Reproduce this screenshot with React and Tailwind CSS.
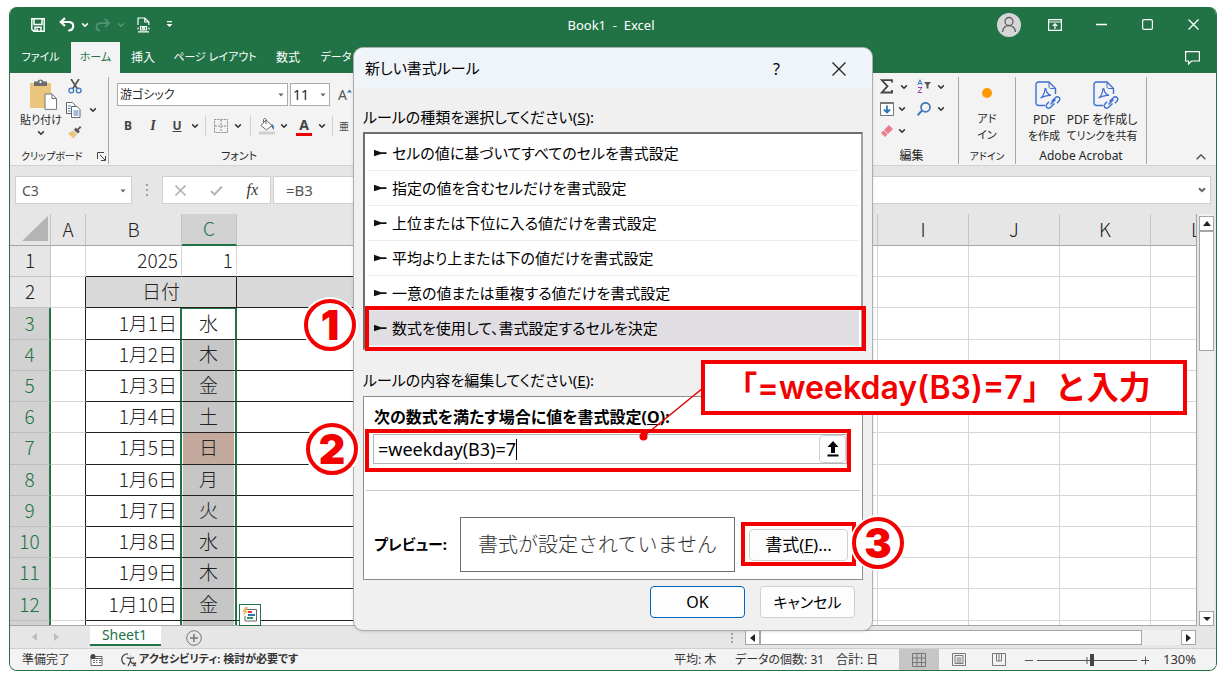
import React from "react";

const RULES = [
  "セルの値に基づいてすべてのセルを書式設定",
  "指定の値を含むセルだけを書式設定",
  "上位または下位に入る値だけを書式設定",
  "平均より上または下の値だけを書式設定",
  "一意の値または重複する値だけを書式設定",
  "数式を使用して、書式設定するセルを決定",
];

const DAYS = [
  ["1月1日", "水"],
  ["1月2日", "木"],
  ["1月3日", "金"],
  ["1月4日", "土"],
  ["1月5日", "日"],
  ["1月6日", "月"],
  ["1月7日", "火"],
  ["1月8日", "水"],
  ["1月9日", "木"],
  ["1月10日", "金"],
  ["", ""],
];

function Chevron({ className = "text-[#333]" }) {
  return (
    <svg width="8" height="6" viewBox="0 0 8 6" className={`shrink-0 ${className}`} aria-hidden="true">
      <path d="M1.2 1.4 4 4.2 6.8 1.4" fill="none" stroke="currentColor" strokeWidth="1.5" />
    </svg>
  );
}

function Triangle({ dir = "down", className = "text-[#666]" }) {
  const d = {
    small: "M1.5 2.5h5L4 5.5z",
    down: "M0 2h8L4 6z",
    up: "M0 6h8L4 1z",
    left: "M6 0v8L1 4z",
    right: "M1 0v8l5-4z",
  }[dir];
  return (
    <svg width="8" height="8" viewBox="0 0 8 8" className={`shrink-0 ${className}`} aria-hidden="true">
      <path d={d} fill="currentColor" />
    </svg>
  );
}

function TitleBar() {
  return (
    <header className="flex h-[35px] items-center bg-[#217346] text-white">
      <div className="flex w-[300px] items-center pl-[21px]">
        <button aria-label="上書き保存">
          <svg width="14" height="14" viewBox="0 0 14 14" fill="none" stroke="currentColor" strokeWidth="1.5">
            <path d="M.8.8h12.4v12.4H2.8L.8 11.2z" />
            <path d="M3 1v5.500h8V1M4 13V9.200h6V13M6.200 13v-2.400" />
          </svg>
        </button>
        <button aria-label="元に戻す" className="ml-3.5 flex items-center gap-1.5">
          <svg width="16" height="15" viewBox="0 0 16 15" fill="none" stroke="currentColor" strokeWidth="2.2">
            <path d="M6 1 1.8 5 6 9M2 5h7.500c3 0 4.700 1.600 4.700 4s-1.700 4.500-5 4.500" />
          </svg>
          <Chevron className="text-white" />
        </button>
        <button aria-label="やり直し" className="ml-1.5 flex items-center gap-1.5 text-[#4f9270]">
          <svg width="16" height="14" viewBox="0 0 16 14" fill="none" stroke="currentColor" strokeWidth="1.800">
            <path d="m10 1 4 4-4 4M14 5H6C3.200 5 1.500 6.500 1.500 8.800S3 12.500 5 12.500" />
          </svg>
          <Chevron className="text-[#4f9270]" />
        </button>
        <button aria-label="印刷プレビュー" className="ml-3">
          <svg width="13" height="16" viewBox="0 0 13 16" fill="none" stroke="currentColor" strokeWidth="1.200">
            <path d="M1 8V1h6.800l4 4v3M7.800 1v4h4M1 14.800h11M1 10.500v2M12 10.500v2M3.500 9.500h6v3.500h-6z" />
            <circle cx="6.500" cy="11.200" r="1" />
          </svg>
        </button>
        <button aria-label="クイック アクセスのカスタマイズ" className="ml-4">
          <svg width="7" height="7" viewBox="0 0 7 7" fill="currentColor">
            <path d="M1 0h5v1.200H1zM.5 3h6l-3 3z" />
          </svg>
        </button>
      </div>
      <h1 className="flex-1 whitespace-pre pr-1 pt-0.5 text-center text-[13px]">Book1  -  Excel</h1>
      <div className="flex w-[300px] items-center justify-end pr-[17px]">
        <button aria-label="アカウント" className="mr-[27px] flex size-6 items-center justify-center rounded-full bg-[#d6d6d6] text-[#5f5f5f]">
          <svg width="16" height="17" viewBox="0 0 16 17" fill="none" stroke="currentColor" strokeWidth="1.300">
            <circle cx="8" cy="5.500" r="4" />
            <path d="M1.500 16c.5-4 3-6.300 6.500-6.300s6 2.300 6.500 6.300" />
          </svg>
        </button>
        <button aria-label="リボンの表示オプション" className="mr-[34px]">
          <svg width="14" height="12" viewBox="0 0 14 12" fill="none" stroke="currentColor" strokeWidth="1.200">
            <path d="M.6.6h12.800v10.800H.6zM.6 3h12.800M7 10V5M4.700 7 7 4.800 9.300 7" />
          </svg>
        </button>
        <button aria-label="最小化" className="mr-[35px]">
          <svg width="11" height="12" viewBox="0 0 11 12" stroke="currentColor" strokeWidth="1.300">
            <path d="M0 5.500h11" />
          </svg>
        </button>
        <button aria-label="最大化" className="mr-[35px]">
          <svg width="11" height="11" viewBox="0 0 11 11" fill="none" stroke="currentColor" strokeWidth="1.200">
            <rect x=".6" y=".6" width="9.800" height="9.800" rx="1.500" />
          </svg>
        </button>
        <button aria-label="閉じる">
          <svg width="11" height="11" viewBox="0 0 11 11" stroke="currentColor" strokeWidth="1.300">
            <path d="m.5.5 10 10m0-10-10 10" />
          </svg>
        </button>
      </div>
    </header>
  );
}

function RibbonTabs() {
  return (
    <nav className="flex h-[31px] items-stretch bg-[#217346] text-[11px] text-white">
      <button className="w-[61px]">ファイル</button>
      <button className="w-[49px] bg-[#f3f3f3] text-[#217346]">ホーム</button>
      <button className="w-[46px] text-xs">挿入</button>
      <button className="w-[98px] whitespace-nowrap">ページ レイアウト</button>
      <button className="w-12 text-xs">数式</button>
      <button className="w-12">データ</button>
      <button aria-label="コメント" className="ml-auto mr-4">
        <svg width="15" height="14" viewBox="0 0 15 14" fill="none" stroke="currentColor" strokeWidth="1.200">
          <path d="M.6.6h13.800v9.400H6.500L3.500 13v-3H.6z" />
        </svg>
      </button>
    </nav>
  );
}

function PdfIcon() {
  return (
    <svg width="26" height="29" viewBox="0 0 26 29" fill="none" stroke="#3b6fd4" strokeWidth="1.400" className="ml-2 shrink-0" aria-hidden="true">
      <path d="M10 24.500H3.500c-1.500 0-2.500-1-2.500-2.500V3.500C1 2 2 1 3.500 1H14l6.500 6.500V13" />
      <path d="M14 1v4.500c0 1.200.8 2 2 2h4.500" strokeWidth="1" />
      <path d="M5.500 17c2-1 4.300-5 4.300-8.500 0-1.500 1.300-1.500 1.300 0 0 2.500 2.500 5.500 5 6-3.500-.5-7.500.8-10.600 2.500z" strokeWidth="1.200" />
      <path d="m16.500 20.500 3.800-3.800c1.200-1.200 2.800-1.200 3.800-.2s1 2.600-.2 3.800l-2 2M19.500 22.500l-3.800 3.800c-1.200 1.200-2.800 1.200-3.800.2s-1-2.600.2-3.800l2-2M15.500 23.500l5-5" />
    </svg>
  );
}

function Ribbon() {
  return (
    <section className="flex h-[93px] border-b border-[#d2d2d2] bg-[#f3f3f3] pb-px pt-1 text-xs text-[#262626]">
      <div className="flex w-[99px] flex-col justify-between border-r border-[#a8a8a8]">
        <div className="flex">
          <button className="flex w-[62px] flex-col items-center pt-0.5">
            <svg width="28" height="31" viewBox="0 0 28 31" className="ml-1" aria-hidden="true">
              <path d="M1 4h21v25H1z" fill="#ecc57d" />
              <path d="M5 2.500h3.500a3.200 3.200 0 0 1 6 0H18V7H5z" fill="#6b6b6b" />
              <circle cx="11.500" cy="3" r="1.200" fill="#f3f3f3" />
              <path d="M16 15h7l4.500 4.500V30.400H16z" fill="#fff" stroke="#777" />
              <path d="M23 15v4.500h4.500" fill="none" stroke="#777" />
            </svg>
            <span className="whitespace-nowrap text-[11px] leading-5">貼り付け</span>
            <Chevron />
          </button>
          <div className="flex flex-col gap-2 pt-0.5">
            <button aria-label="切り取り" className="-ml-1">
              <svg width="14" height="15" viewBox="0 0 14 15" fill="none" aria-hidden="true">
                <path d="M3 0 9.500 10M11 0 4.500 10" stroke="#555" strokeWidth="1.700" />
                <circle cx="3.300" cy="11.500" r="2.400" stroke="#3f78bd" strokeWidth="1.300" />
                <circle cx="10.700" cy="11.500" r="2.400" stroke="#3f78bd" strokeWidth="1.300" />
              </svg>
            </button>
            <button aria-label="コピー" className="-ml-1.5 flex items-center gap-2">
              <svg width="15" height="16" viewBox="0 0 15 16" fill="#fff" stroke="#666" aria-hidden="true">
                <path d="M.5.500h6l2.500 2.500v8.500H.5z" />
                <path d="M5.500 4.500h5.500l3 3v8H5.500z" />
                <path d="M2 4h3M2 6.500h2.500M2 9h2.500M7.500 9h5M7.500 11h5M7.500 13h5" stroke="#3f78bd" />
              </svg>
              <Chevron />
            </button>
            <button aria-label="書式のコピー" className="-ml-1">
              <svg width="14" height="13" viewBox="0 0 14 13" aria-hidden="true">
                <path d="m12 0 1.500 1.500L10.500 4 12 5.500 9.500 7.500 5.800 3.800 8 1.500 9.300 3z" fill="#5a5a5a" />
                <path d="m5 4.500 4 4L5.500 12.500 0 7.500z" fill="#ecc57d" />
              </svg>
            </button>
          </div>
        </div>
        <div className="flex items-center justify-between pl-[11px] pr-0.5 leading-4">
          <span className="whitespace-nowrap text-[10px]">クリップボード</span>
          <svg width="9" height="9" viewBox="0 0 9 9" fill="none" stroke="#444" aria-hidden="true">
            <path d="M.5 7V.5H7M3 3l5 5M8.500 4v4.500H4" />
          </svg>
        </div>
      </div>

      <div className="flex w-[260px] flex-col justify-between">
        <div className="pl-2 pt-1.5">
          <div className="flex items-center gap-0.5">
            <button className="flex h-[23px] w-[171px] items-center justify-between border border-[#ababab] bg-white pl-0.5 pr-0.5">
              游ゴシック
              <Triangle dir="small" />
            </button>
            <button className="flex h-[23px] w-10 items-center justify-between border border-[#ababab] bg-white pl-0.5 pr-0.5 text-sm">
              11
              <Triangle dir="small" />
            </button>
            <button className="ml-1.5 flex text-sm text-[#555]" aria-label="フォント サイズの拡大">
              A
              <svg width="5" height="4" viewBox="0 0 5 4" className="mt-1" aria-hidden="true">
                <path d="M0 3.500h5L2.500.5z" fill="#3f78bd" />
              </svg>
            </button>
          </div>
          <div className="mt-2 flex h-6 items-center font-bold text-[#444]">
            <button className="w-[22px]">B</button>
            <button className="ml-0.5 w-6 font-['Liberation_Serif'] text-sm italic">I</button>
            <button className="mr-0.5 w-6 underline">U</button>
            <Chevron />
            <span className="ml-1.5 mr-2 h-5 w-px bg-[#d0d0d0]" />
            <svg width="14" height="14" viewBox="0 0 14 14" fill="none" stroke="#8a8a8a" aria-hidden="true">
              <path d="M.5.500h13v13H.5zM7 1v12M1 7h12" strokeDasharray="2 1" />
            </svg>
            <Chevron className="ml-1.5 text-[#333]" />
            <span className="mx-2 h-5 w-px bg-[#d0d0d0]" />
            <svg width="17" height="17" viewBox="0 0 17 17" aria-hidden="true">
              <path d="m7 2 6 5.500-5.500 4.500L2 7.500zM7 6V1.500c0-1.300-2.500-1.300-2.500 0V5" fill="#fff" stroke="#666" />
              <path d="M13 6c2 1 2.500 3.500 1.500 6-1-1-1.500-3-2.500-4z" fill="#3f78bd" />
              <path d="M0 13.500h16v3H0z" fill="#d0d0d0" />
            </svg>
            <Chevron className="ml-1 text-[#333]" />
            <button aria-label="フォントの色" className="ml-2 w-4 border-b-[3px] border-[#e00] text-sm leading-4">A</button>
            <Chevron className="ml-1.5 text-[#333]" />
            <span className="mx-1.5 h-5 w-px bg-[#d0d0d0]" />
            <button className="text-[10px] font-normal leading-5">亜</button>
          </div>
        </div>
        <div className="text-center text-[11px] leading-4">フォント</div>
      </div>

      <div className="flex-1" />

      <div className="flex w-[82px] flex-col justify-between border-r border-[#a8a8a8]">
        <div className="grid grid-cols-[37px_37px] gap-y-2 pl-[3px] pt-0.5">
          <button aria-label="オート SUM" className="flex items-center gap-1.5">
            <svg width="14" height="15" viewBox="0 0 14 15" fill="none" stroke="#444" strokeWidth="1.800" aria-hidden="true">
              <path d="M12 3.500V1.200H1.800L7.500 7.200 1.800 13.500H12V11" />
            </svg>
            <Chevron />
          </button>
          <button aria-label="並べ替えとフィルター" className="flex items-center gap-1.5">
            <svg width="14" height="15" viewBox="0 0 14 15" fill="none" aria-hidden="true">
              <path d="M.8 6 3 .8 5.200 6M1.500 4.500h3" stroke="#3f78bd" />
              <path d="M1 8.500h4L1 13.500h4" stroke="#9a3fae" />
              <path d="M7 3h7l-2.500 3v3.500h-2V6z" fill="#555" />
            </svg>
            <Chevron />
          </button>
          <button aria-label="フィル" className="flex items-center gap-1">
            <svg width="14" height="14" viewBox="0 0 14 14" fill="none" aria-hidden="true">
              <path d="M.5.500h13v13H.5z" fill="#fff" stroke="#777" />
              <path d="M.5 1h13" stroke="#777" strokeWidth="2" />
              <path d="M7 3.500v7M4 7.500l3 3 3-3" stroke="#2e75b6" strokeWidth="1.800" />
            </svg>
            <Chevron />
          </button>
          <button aria-label="検索と選択" className="flex items-center gap-1.5">
            <svg width="14" height="14" viewBox="0 0 14 14" fill="none" stroke="#3f78bd" strokeWidth="1.700" aria-hidden="true">
              <circle cx="8.500" cy="5.300" r="4.500" />
              <path d="M5 8.500.6 13.200" strokeWidth="2" />
            </svg>
            <Chevron />
          </button>
          <button aria-label="クリア" className="flex items-center gap-1">
            <svg width="14" height="14" viewBox="0 0 14 14" aria-hidden="true">
              <path d="m9 1 4 4-5 5-4-4z" fill="#e8808f" />
              <path d="m3.500 6.500 4 4-2.500 2.500-4-4z" fill="#e8808f" />
            </svg>
            <Chevron />
          </button>
        </div>
        <div className="pr-3 text-center text-xs leading-4">編集</div>
      </div>

      <div className="flex w-[57px] flex-col items-center justify-between border-r border-[#a8a8a8]">
        <button className="flex flex-col items-center pt-[11px] text-[11px] leading-4">
          <span className="mb-[13px] size-2.5 rounded-full bg-[#ff9900]" />
          <span>アド</span>
          <span>イン</span>
        </button>
        <div className="text-[10px] leading-4">アドイン</div>
      </div>

      <div className="flex w-[131px] flex-col justify-between border-r border-[#a8a8a8] text-center">
        <div className="flex justify-between px-2 pt-1 leading-4">
          <button className="flex w-10 flex-col items-center">
            <PdfIcon />
            <span className="mt-0.5">PDF</span>
            <span className="whitespace-nowrap text-[11px]">を作成</span>
          </button>
          <button className="flex w-[72px] flex-col items-center">
            <PdfIcon />
            <span className="mt-0.5 whitespace-nowrap">PDF を作成し</span>
            <span className="whitespace-nowrap text-[11px]">てリンクを共有</span>
          </button>
        </div>
        <div className="leading-4">Adobe Acrobat</div>
      </div>

      <div className="flex w-[69px] items-end justify-end pb-1 pr-2.5">
        <button aria-label="リボンを折りたたむ">
          <svg width="10" height="6" viewBox="0 0 10 6" fill="none" stroke="#444" strokeWidth="1.300">
            <path d="m.7 5.200 4.300-4.300 4.300 4.300" />
          </svg>
        </button>
      </div>
    </section>
  );
}

function FormulaBar() {
  return (
    <section className="flex h-12 items-start bg-[#e6e6e6] px-[5px] pt-2.5 text-[#555]">
      <button className="flex h-7 w-[117px] items-center justify-between border border-[#cfcfcf] bg-white pl-1.5 pr-1 pt-0.5 text-sm">
        C3
        <Triangle dir="small" />
      </button>
      <span className="flex h-7 w-[30px] flex-col items-center justify-center gap-[3px]">
        <i className="size-0.5 bg-[#a0a0a0]" />
        <i className="size-0.5 bg-[#a0a0a0]" />
        <i className="size-0.5 bg-[#a0a0a0]" />
      </span>
      <div className="flex h-7 w-[109px] items-center justify-between border border-[#cfcfcf] bg-white pl-3 pr-3">
        <svg width="11" height="11" viewBox="0 0 11 11" stroke="#b5b5b5" strokeWidth="1.600" aria-hidden="true">
          <path d="m.5.500 10 10m0-10-10 10" />
        </svg>
        <svg width="13" height="11" viewBox="0 0 13 11" fill="none" stroke="#b5b5b5" strokeWidth="2" aria-hidden="true">
          <path d="m1 6 3.500 3.500L12 1.500" />
        </svg>
        <span className="font-['Liberation_Serif'] text-base italic text-[#333]">fx</span>
      </div>
      <div className="ml-0.5 flex h-7 flex-1 items-center justify-between border border-[#cfcfcf] bg-white pl-3 pr-1">
        <span className="text-[15px]">=B3</span>
        <svg width="8" height="6" viewBox="0 0 8 6" fill="none" stroke="#666" strokeWidth="2" aria-hidden="true">
          <path d="M1 1.200 4 4.200l3-3" />
        </svg>
      </div>
    </section>
  );
}

function Sheet() {
  const grid = "border-b border-r border-[#d6d6d6]";
  const black = "border-b border-[#222]";
  const head = "border-b border-r border-b-[#a6a6a6] border-r-[#c4c4c4] font-light";
  return (
    <section className="flex h-[412px] bg-[#e6e6e6]">
      <div className="min-w-0 flex-1 overflow-hidden border-b border-r border-[#a6a6a6]">
        <table className="h-[438px] w-[1232px] table-fixed border-separate border-spacing-0 bg-white text-[19px] font-light leading-6 text-[#222] [&_td]:pb-0.5 [&_th]:pb-0.5">
          <colgroup>
            <col className="w-[41px]" />
            <col className="w-[35px]" />
            <col className="w-24" />
            <col className="w-[55px]" />
            <col className="w-[364px]" />
            <col className="w-[277px]" />
            <col className="w-[91px]" />
            <col className="w-[91px]" />
            <col className="w-[91px]" />
            <col className="w-[91px]" />
          </colgroup>
          <thead>
            <tr className="h-8 bg-[#e6e6e6]">
              <th className={head}>
                <svg width="26" height="25" viewBox="0 0 26 25" className="ml-auto mr-0.5" aria-hidden="true">
                  <path d="M26 0v25H0z" fill="#b4b4b4" />
                </svg>
              </th>
              <th className={head}>A</th>
              <th className={head}>B</th>
              <th className="border-b-2 border-r border-b-[#217346] border-r-[#c4c4c4] bg-[#d2d2d2] font-light text-[#217346]">C</th>
              <th className={head} />
              <th className={head} />
              <th className={head}>I</th>
              <th className={head}>J</th>
              <th className={head}>K</th>
              <th className={head}>L</th>
            </tr>
          </thead>
          <tbody>
            <tr className="h-[31px]">
              <th className="border-b border-r border-[#c4c4c4] bg-[#e6e6e6] font-light">1</th>
              <td className={grid} />
              <td className="border-b border-r border-b-[#222] border-r-[#d6d6d6] pr-[3px] text-right">2025</td>
              <td className="border-b border-r border-b-[#222] border-r-[#d6d6d6] pr-[3px] text-right">1</td>
              <td className={black} />
              <td className={grid} />
              <td className={grid} />
              <td className={grid} />
              <td className={grid} />
              <td className={grid} />
            </tr>
            <tr className="h-[31px]">
              <th className="border-b border-r border-[#c4c4c4] bg-[#e6e6e6] font-light">2</th>
              <td className="border-b border-r border-b-[#d6d6d6] border-r-[#222]" />
              <td colSpan="2" className="border-b border-r border-[#222] bg-[#d9d9d9] text-center">日付</td>
              <td className="border-b border-[#222] bg-[#d9d9d9]" />
              <td className={grid} />
              <td className={grid} />
              <td className={grid} />
              <td className={grid} />
              <td className={grid} />
            </tr>
            {DAYS.map(([date, day], i) => (
              <tr key={i} className="h-[31px]">
                <th className="border-b border-r-2 border-b-[#bdbdbd] border-r-[#217346] bg-[#d2d2d2] font-light text-[#217346]">
                  {date && i + 3}
                </th>
                <td className="border-b border-r border-b-[#d6d6d6] border-r-[#222]" />
                <td className="border-b border-r-2 border-b-[#222] border-r-[#217346] pr-[3px] text-right">{date}</td>
                <td
                  className={`border-b border-r-2 border-b-[#222] border-r-[#217346] text-center ${
                    i === 0
                      ? "bg-white shadow-[inset_0_1px_#217346]"
                      : day === "日"
                        ? "bg-[#c4aa9c] shadow-[inset_1px_0_#fff,inset_-1px_0_#fff]"
                        : "bg-[#c6c6c6] shadow-[inset_1px_0_#fff,inset_-1px_0_#fff]"
                  }`}
                >
                  {day}
                </td>
                <td className={black} />
                <td className={grid} />
                <td className={grid} />
                <td className={grid} />
                <td className={grid} />
                <td className={grid} />
              </tr>
            ))}
          </tbody>
        </table>
      </div>
      <div className="ml-0.5 mr-0.5 flex w-[15px] flex-col bg-[#f0f0f0] pt-0.5">
        <button aria-label="上へスクロール" className="flex h-[15px] items-center justify-center border border-[#a6a6a6] bg-white">
          <Triangle dir="up" className="text-[#222]" />
        </button>
        <div className="h-[120px] border border-[#a6a6a6] bg-white" />
        <button aria-label="下へスクロール" className="mt-auto flex h-[15px] items-center justify-center border border-[#a6a6a6] bg-white">
          <Triangle className="text-[#222]" />
        </button>
      </div>
    </section>
  );
}

function SheetTabs() {
  return (
    <section className="flex h-[23px] items-start border-b border-[#cfcfcf] bg-[#e6e6e6]">
      <div className="flex h-full w-20 items-center gap-3.5 pl-[21px]">
        <Triangle dir="left" className="text-[#bdbdbd]" />
        <Triangle dir="right" className="text-[#bdbdbd]" />
      </div>
      <button className="h-5 w-[71px] border-b-2 border-[#217346] bg-white pr-0.5 text-sm leading-4 text-[#217346]">Sheet1</button>
      <button aria-label="新しいシート" className="ml-[25px] mt-1">
        <svg width="16" height="16" viewBox="0 0 16 16" fill="none" stroke="#777">
          <circle cx="8" cy="8" r="7.300" />
          <path d="M8 4v8M4 8h8" strokeWidth="1.500" />
        </svg>
      </button>
      <div className="ml-auto mr-5 mt-1 flex items-center">
        <span className="mr-3 flex flex-col gap-0.5">
          <i className="size-0.5 bg-[#a0a0a0]" />
          <i className="size-0.5 bg-[#a0a0a0]" />
          <i className="size-0.5 bg-[#a0a0a0]" />
        </span>
        <button aria-label="左へスクロール" className="flex h-[15px] w-[15px] items-center justify-center border border-[#a6a6a6] bg-white">
          <Triangle dir="left" className="text-[#222]" />
        </button>
        <div className="flex w-[421px] bg-[#f0f0f0]">
          <div className="h-[15px] w-[382px] border border-[#a6a6a6] bg-white" />
        </div>
        <button aria-label="右へスクロール" className="flex h-[15px] w-[15px] items-center justify-center border border-[#a6a6a6] bg-white">
          <Triangle dir="right" className="text-[#222]" />
        </button>
      </div>
    </section>
  );
}

function StatusBar() {
  return (
    <footer className="flex h-[21px] items-center overflow-hidden bg-[#f3f3f3] pl-3 text-xs text-[#333]">
      <span>準備完了</span>
      <svg width="13" height="12" viewBox="0 0 13 12" className="ml-5" aria-hidden="true">
        <path d="M1 2.500h11v9H1z" fill="#fff" stroke="#666" />
        <path d="M1 4.500h11M3 6.500h2M6 6.500h1.500M9 6.500h2M3 8.500h2M6 8.500h1.500M9 8.500h2" stroke="#666" />
        <circle cx="3" cy="2.500" r="2.500" fill="#444" />
      </svg>
      <svg width="16" height="14" viewBox="0 0 16 14" fill="none" stroke="#444" strokeWidth="1.300" className="ml-[18px]" aria-hidden="true">
        <path d="M7 .8C3.500.8.8 3 .8 6.200s1.500 4.500 3.500 5M5.500 4.500c2 1 5 1 7.500 0M9.500 5.500V8M7 13l2.500-5 2 3M12 9.500l3 3.500M15 9.500 12 13M9.300 2.800v.5" />
      </svg>
      <strong className="ml-0.5 text-[11px]">アクセシビリティ: 検討が必要です</strong>
      <div className="ml-auto flex h-full items-center">
        <span className="w-[61px] whitespace-nowrap">平均: 木</span>
        <span className="w-[101px] whitespace-nowrap">データの個数: 31</span>
        <span className="w-[63px] whitespace-nowrap">合計: 日</span>
        <button aria-label="標準" className="flex h-full w-10 items-center justify-center bg-[#c6c6c6]">
          <svg width="14" height="14" viewBox="0 0 14 14" fill="none" stroke="#777">
            <path d="M.5.500h13v13H.5zM5 0v14M9.500 0v14M0 5h14M0 9.500h14" />
          </svg>
        </button>
        <button aria-label="ページ レイアウト" className="flex h-full w-10 items-center justify-center">
          <svg width="14" height="13" viewBox="0 0 14 13" fill="none" stroke="#777">
            <path d="M.5.500h13v12H.5zM3 2.500h8v8H3zM4.500 5h5M4.500 7h5M4.500 9h5" />
          </svg>
        </button>
        <button aria-label="改ページ プレビュー" className="flex h-full w-10 items-center justify-center">
          <svg width="14" height="13" viewBox="0 0 14 13" fill="none" stroke="#777">
            <path d="M.5.500h13v12H.5zM4.500 1v7h5V1M7 1v7" />
          </svg>
        </button>
        <svg width="124" height="12" viewBox="0 0 124 12" fill="none" stroke="#555" className="ml-1.5" aria-hidden="true">
          <path d="M0 6.500h8M12 6.500h100M62 3v7M116 6.500h8M120.500 2.500v8" />
          <path d="M65 0h4v12h-4z" fill="#444" stroke="none" />
        </svg>
        <span className="w-[67px] pl-3.5 text-[13px]">130%</span>
      </div>
    </footer>
  );
}

function RuleDialog() {
  return (
    <div
      role="dialog"
      aria-labelledby="dlg-title"
      className="absolute left-[344px] top-10 flex h-[584px] w-[520px] flex-col overflow-hidden rounded-[10px] border border-[#adadad] bg-[#f0f0f0] text-base text-black shadow-sm"
    >
      <div className="flex h-[41px] shrink-0 items-center bg-[#eff4f9] pl-[11px] pr-[26px]">
        <h2 id="dlg-title" className="text-[15px]">新しい書式ルール</h2>
        <button aria-label="ヘルプ" className="ml-auto mr-[52px] text-base">?</button>
        <button aria-label="閉じる">
          <svg width="14" height="14" viewBox="0 0 14 14" stroke="#222" strokeWidth="1.300">
            <path d="m.5.500 13 13m0-13-13 13" />
          </svg>
        </button>
      </div>
      <div className="flex flex-1 flex-col px-[9px] pt-4 text-[15px]">
        <div id="kind" className="h-[27px] leading-6">ルールの種類を選択してください(<u>S</u>):</div>
        <div role="listbox" aria-labelledby="kind" className="border-2 border-[#6e6e6e] border-b-[#a0a0a0] border-r-[#a0a0a0] bg-white p-0.5">
          {RULES.map((rule, i) => (
            <button
              key={rule}
              role="option"
              aria-selected={i === 5}
              className={`flex h-[35px] w-full items-center gap-[5px] whitespace-nowrap border-b border-[#ececec] pl-1.5 ${i === 5 ? "bg-[#e0dee3]" : ""}`}
            >
              <svg width="14" height="8" viewBox="0 0 14 8" aria-hidden="true">
                <path d="M1 .8 8 3.200h5.500v1.800H8L1 7.200z" fill="#111" />
              </svg>
              {rule}
            </button>
          ))}
        </div>
        <div className="mt-[18px] h-7 leading-6">ルールの内容を編集してください(<u>E</u>):</div>
        <div className="h-[184px] border border-[#8c8c8c] bg-white">
          <label htmlFor="formula" className="block h-[37px] pl-2.5 pt-2 text-base font-bold leading-6">
            次の数式を満たす場合に値を書式設定(<u>O</u>):
          </label>
          <div className="ml-[9px] mr-[15px] flex h-[30px] items-center border border-[#b5b5b5] bg-white pl-1 text-lg">
            <input id="formula" defaultValue="=weekday(B3)=7" className="field-sizing-content outline-none" />
            <span className="h-[21px] w-px bg-black" />
            <button aria-label="ダイアログを縮小" className="ml-auto flex h-7 w-[27px] items-center justify-center rounded border border-[#d0d0d0] bg-[#fdfdfd]">
              <svg width="12" height="16" viewBox="0 0 12 16" aria-hidden="true">
                <path d="M6 0 11.500 6H8v6H4V6H.5zM.5 13.500h11v2H.5z" fill="#000" />
              </svg>
            </button>
          </div>
          <div className="mx-0.5 mt-[26px] border-t border-[#c8c8c8]" />
          <div className="mt-[26px] flex h-[55px] items-center pl-2.5">
            <strong className="w-[86px] text-[15px]">プレビュー:</strong>
            <div className="flex h-full w-[275px] items-center justify-center whitespace-nowrap border border-[#6e6e6e] text-xl font-light text-[#333] [font-feature-settings:normal]">
              書式が設定されていません
            </div>
            <button className="ml-3.5 h-8 w-[99px] rounded border border-[#d0d0d0] bg-[#fdfdfd] text-[17px] leading-5">
              書式(<u>F</u>)...
            </button>
          </div>
        </div>
        <div className="mt-1.5 flex justify-end gap-[15px] pr-2">
          <button className="h-8 w-[95px] rounded border border-[#0067c0] bg-[#fdfdfd] text-base leading-5">OK</button>
          <button className="h-8 w-[95px] rounded border border-[#d0d0d0] bg-[#fdfdfd] leading-5">キャンセル</button>
        </div>
      </div>
    </div>
  );
}

function Step({ n, className }) {
  return (
    <div
      className={`absolute flex size-[52px] items-center justify-center rounded-full border-4 border-[#f30000] bg-white font-['Inter'] text-[41px] font-black leading-none text-[#f30000] ring-2 ring-white ${className}`}
    >
      {n}
    </div>
  );
}

function Annotations() {
  return (
    <>
      <div className="pointer-events-none absolute left-[356px] top-[299px] h-[45px] w-[501px] border-4 border-[#f30000]" />
      <div className="pointer-events-none absolute left-[356px] top-[422px] h-[43px] w-[486px] border-4 border-[#f30000]" />
      <div className="pointer-events-none absolute left-[732px] top-[515px] h-11 w-[115px] border-4 border-[#f30000]" />
      <svg width="70" height="60" viewBox="0 0 70 60" className="pointer-events-none absolute left-[630px] top-[377px]" aria-hidden="true">
        <path d="M4.500 52.500 64 4" stroke="#e60000" strokeWidth="1.500" />
        <circle cx="4.500" cy="52.500" r="4" fill="#f30000" />
      </svg>
      <div className="absolute left-[692px] top-[353px] flex h-[55px] w-[486px] items-center justify-center whitespace-nowrap border-4 border-[#f30000] bg-white pr-3 font-['Inter','Noto_Sans_CJK_JP',sans-serif] text-[32px] font-semibold leading-none text-[#f30000] [font-feature-settings:normal]">
        「=weekday(B3)=7」と入力
      </div>
      <Step n={1} className="left-[295px] top-[292px]" />
      <Step n={2} className="left-[297px] top-[416px]" />
      <Step n={3} className="left-[843px] top-[510px]" />
      <div className="absolute left-[230px] top-[597px] flex size-[22px] items-center justify-center border border-[#217346] bg-white">
        <svg width="16" height="16" viewBox="0 0 16 16" fill="none" aria-hidden="true">
          <path d="M4 2.500h10.500v11.500H3V9" stroke="#666" />
          <path d="M6 5h4" stroke="#d33" strokeWidth="2" />
          <path d="M6 8h7" stroke="#2e75b6" strokeWidth="2" />
          <path d="M5 11h6" stroke="#2a9d5c" strokeWidth="2" />
          <path d="M3 0h3L4 4h2L1 9l1.500-4H.5z" fill="#f0b45a" />
        </svg>
      </div>
    </>
  );
}

export default function App() {
  return (
    <div className="bg-white px-[9px] py-[7px] font-['Noto_Sans','Noto_Sans_CJK_JP',sans-serif] [font-feature-settings:'palt']">
      <main className="relative">
        <div className="overflow-hidden rounded-lg border-x border-b border-[#217346]">
          <TitleBar />
          <RibbonTabs />
          <Ribbon />
          <FormulaBar />
          <div className="font-['Noto_Sans_CJK_JP',sans-serif] [font-feature-settings:normal]">
            <Sheet />
          </div>
          <SheetTabs />
          <StatusBar />
        </div>
        <RuleDialog />
        <Annotations />
      </main>
    </div>
  );
}
